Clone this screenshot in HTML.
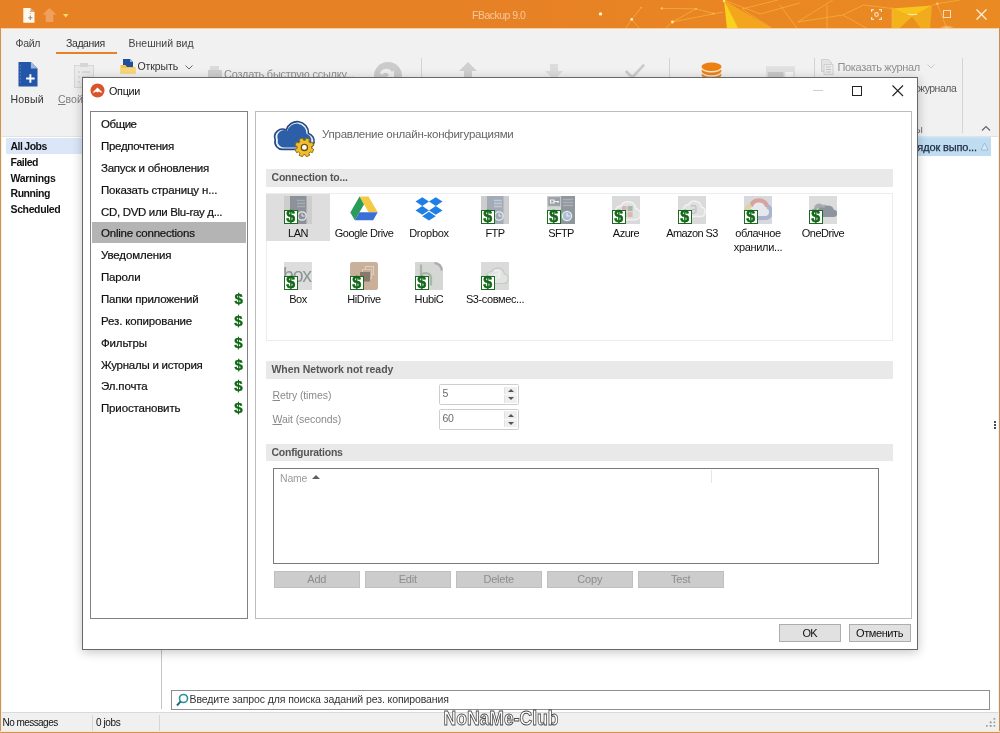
<!DOCTYPE html>
<html lang="ru">
<head>
<meta charset="utf-8">
<title>FBackup 9.0</title>
<style>
*{box-sizing:border-box;margin:0;padding:0}
html,body{width:1000px;height:733px;overflow:hidden;background:#fff}
body{position:relative;font-family:"Liberation Sans","DejaVu Sans",sans-serif;font-size:12px;color:#1a1a1a}
.abs{position:absolute}
.t{position:absolute;white-space:nowrap;line-height:16px;height:16px}
#win{position:absolute;left:0;top:0;width:1000px;height:733px;background:#fff;overflow:hidden;will-change:transform}
#titlebar{position:absolute;left:0;top:0;width:1000px;height:29px;background:#e78125}
#titlebar:after{content:"";position:absolute;left:0;top:28px;width:1000px;height:1px;background:#f4cfa6}
#ribbon{position:absolute;left:1px;top:29px;width:998px;height:108px;background:#f1f1f1;box-shadow:inset 0 1px 0 #fbf1e6;border-bottom:1px solid #e2e2e2}
.tab{font-size:10.5px;color:#444}
.gray{color:#8f8f8f}
#leftpane{position:absolute;left:1px;top:137px;width:161px;height:572px;background:#fff;border-right:1px solid #c4c4c4}
.job{font-weight:bold;font-size:10.5px;color:#111;left:9.5px;letter-spacing:-0.4px}
#status{position:absolute;left:1px;top:712px;width:998px;height:20px;background:#f0f0f0;border-top:1px solid #d9d9d9}
#search{position:absolute;left:171px;top:690px;width:819px;height:20px;border:1px solid #8e8e8e;background:#fff}
/* dialog */
#dlg{position:absolute;left:82px;top:77px;width:836px;height:573px;background:#fff;border:1px solid #686868;box-shadow:0 2px 10px rgba(0,0,0,.24)}
#nav{position:absolute;left:7px;top:33px;width:158px;height:508px;border:1px solid #828282;background:#fff}
#nav .it{-webkit-text-stroke:0.2px #111;position:absolute;left:1px;width:154px;height:22px;line-height:22px;padding-left:9px;font-size:11.5px;color:#111;white-space:nowrap;letter-spacing:-0.15px}
#nav .sel{background:#b4b4b4}
#nav .d{-webkit-text-stroke:0.35px #0b5a10;position:absolute;right:3.5px;top:0;color:#0b6a10;font-weight:bold;font-size:15px}
#panel{position:absolute;left:172px;top:33px;width:657px;height:508px;border:1px solid #bdbdbd;background:#fff}
.hdr{position:absolute;left:10px;width:627px;height:17.5px;background:#e9e9e9;font-weight:bold;font-size:10.5px;color:#555;line-height:16px;padding-left:5.5px;letter-spacing:-0.2px}
.ic{position:absolute;width:66px;text-align:center;font-size:11px;line-height:14px;color:#111;letter-spacing:-0.2px}
.cell{position:absolute;width:66px;height:47px}
.selc{background:#dedede;width:64px;margin-left:1px}
.ico{position:absolute;left:19px;top:2px;width:28px;height:28px}
.selc .ico{left:18px}
.ico svg{position:absolute;left:0;top:0;display:block}
.bdg{position:absolute;left:0;top:14px;width:14px;height:14px;background:#fff;border:1px solid #1d6b22;color:#126818;font-weight:bold;font-size:16px;line-height:12px;text-align:center;-webkit-text-stroke:0.5px #126818;text-indent:-0.5px;font-family:"Liberation Sans",sans-serif}
.lbl{position:absolute;left:-10px;width:86px;top:32px;text-align:center;font-size:11px;line-height:14px;color:#111;letter-spacing:-0.2px;white-space:nowrap}
.selc .lbl{left:-11px}
.btn{position:absolute;height:18px;background:#e1e1e1;border:1px solid #adadad;font-size:11px;text-align:center;line-height:16px;color:#111}
.dbtn{position:absolute;top:458.5px;width:85.5px;height:17px;letter-spacing:-0.2px;background:#cccccc;border:1px solid #bfbfbf;font-size:11px;text-align:center;line-height:15px;color:#8d8d8d}
.spin{position:absolute;left:183px;width:79.5px;height:21px;border:1px solid #cdcdcd;border-radius:1.5px;background:#fff;font-size:10.5px;color:#6a6a6a;line-height:16px;padding-left:2.5px;letter-spacing:-0.4px}
.spin i{position:absolute;right:1px;top:1.5px;width:13px;height:16px;background:#efefef;border-left:1px solid #e2e2e2}
.spin i:before{content:"";position:absolute;left:3px;top:2.5px;border:3px solid transparent;border-top:0;border-bottom:3.500px solid #555}
.spin i:after{content:"";position:absolute;left:3px;top:10.500px;border:3px solid transparent;border-bottom:0;border-top:3.500px solid #555}
.spin b{position:absolute;right:1px;top:9px;width:13px;height:1px;background:#fafafa}
</style>
</head>
<body>
<div id="win">
  <div id="titlebar">
    <svg class="abs" style="left:540px;top:0" width="460" height="29" viewBox="540 0 460 29">
      <defs>
        <linearGradient id="tg" x1="0" x2="1" y1="0" y2="0">
          <stop offset="0" stop-color="#e78125"/><stop offset="0.4" stop-color="#e98623"/><stop offset="1" stop-color="#ea8a22"/>
        </linearGradient>
        <radialGradient id="glow"><stop offset="0" stop-color="#fff" stop-opacity=".85"/><stop offset="1" stop-color="#fff" stop-opacity="0"/></radialGradient>
      </defs>
      <rect x="540" width="460" height="29" fill="url(#tg)"/>
      <polygon points="724,0 773,29 738,29" fill="#f2a51d"/>
      <polygon points="724,0 738.500,29 727,29" fill="#f8d21c"/>
      <polygon points="892,8.500 932,5.500 912,17" fill="#f6c41c"/>
      <polygon points="892,8.500 912,17 899,29 892,29" fill="#f3b31d"/>
      <polygon points="932,5.500 930,29 921,29 912,17" fill="#f2ab1d"/>
      <polygon points="912,17 921,29 899,29" fill="#e9911f"/>
      <g stroke="#f6b540" stroke-width=".8" fill="none" opacity=".85">
        <path d="M625,29L631.700,19.400L640,29M631.700,19.400L641,7.700M665,29L672.400,22L723,12M672.400,22L696,8.800L713.500,13.600M661.800,8.400L696,8.800M742,9L778,0M742,9L773,29M724,0L760,14L800,3M780,5L797.600,29M832.800,0L797.600,22L842.700,15M827,5V29M842.700,15L863.600,5L892,8.500M842.700,15L868,29M892,7V29M932,5.500L937.300,3.700L960,0M937.300,3.700L947,29"/>
      </g>
      <g fill="#ffe9a8"><circle cx="600.500" cy="13.900" r="1.700" fill="#fff3cf"/><circle cx="631.700" cy="19.400" r="1.400"/><circle cx="661.800" cy="8.400" r="1.200" fill="#f9c15a"/><circle cx="641" cy="7.700" r=".9" fill="#f4ad4a"/><circle cx="672.400" cy="22" r="1.400"/><circle cx="696" cy="8.800" r="1.100" fill="#f8bd52"/><circle cx="713.500" cy="13.600" r="1" fill="#f8bd52"/><circle cx="937.300" cy="3.700" r="1.200" fill="#f9c866"/><circle cx="724" cy="1" r="1.200" fill="#fbe27a"/></g>
      <ellipse cx="947" cy="30" rx="9" ry="5" fill="url(#glow)"/>
    </svg>
    <!-- quick access -->
    <svg class="abs" style="left:23px;top:7.500px" width="12" height="15" viewBox="0 0 12 15"><path d="M0.300,0h7.200l4,4v10.800h-11.200z" fill="#fff8ec"/><path d="M7.500,0v4h4z" fill="#d9a66a"/><path d="M7.300,7.500v4.500M5.200,9.800h4.200" stroke="#8d8d8d" stroke-width="1.100"/><path d="M7.300,3v3" stroke="#a9a9a9" stroke-width="1" stroke-dasharray="1 1"/></svg>
    <svg class="abs" style="left:42px;top:8px" width="15" height="14" viewBox="0 0 15 14"><path d="M7.500,0L14.500,6.500H11.300V14H3.700V6.500H0.500z" fill="#f0a05c"/></svg>
    <svg class="abs" style="left:63px;top:14px" width="6" height="4" viewBox="0 0 6 4"><path d="M0,0h5.600l-2.800,3.400z" fill="#fbd86a"/></svg>
    <div class="t" style="left:472px;top:7px;font-size:10.500px;color:#f6c79a;letter-spacing:-0.5px">FBackup 9.0</div>
    <!-- window controls -->
    <svg class="abs" style="left:871px;top:9px" width="11" height="11" viewBox="0 0 11 11" fill="none" stroke="#f9dcbc" stroke-width="1.200"><path d="M0.600,3V0.600H3M8,0.600h2.400V3M10.400,8v2.400H8M3,10.400H0.600V8"/><circle cx="5.500" cy="5.500" r="1.800"/></svg>
    <div class="abs" style="left:907.500px;top:14px;width:9px;height:1px;background:#fbe7b8"></div>
    <div class="abs" style="left:942.500px;top:10px;width:8.500px;height:8px;border:1px solid #f9dcbc"></div>
    <svg class="abs" style="left:976px;top:9px" width="11" height="11" viewBox="0 0 11 11" stroke="#fdeedd" stroke-width="1.300"><path d="M0.500,0.500l10,10M10.500,0.500l-10,10"/></svg>
  </div>

  <div id="ribbon">
    <div class="t tab" style="left:14.500px;top:6px;letter-spacing:-0.33px">Файл</div>
    <div class="t tab" style="left:65px;top:5.500px;letter-spacing:-0.4px;color:#333">Задания</div>
    <div class="abs" style="left:55px;top:23px;width:61px;height:2px;background:#e78125"></div>
    <div class="t tab" style="left:127.500px;top:6px;letter-spacing:0">Внешний вид</div>

    <!-- Новый -->
    <svg class="abs" style="left:16.500px;top:33px" width="20" height="24.500" viewBox="0 0 21 26" preserveAspectRatio="none"><path d="M0.500,0h13l7,7v19h-20z" fill="#2356a8"/><path d="M13.500,0v7h7z" fill="#9db7e0"/><path d="M2.500,3v20" stroke="#5f86c9" stroke-width="1" stroke-dasharray="1.500 2"/><path d="M13,13v9M8.500,17.500h9" stroke="#fff" stroke-width="2"/></svg>
    <div class="t" style="left:9.500px;top:62px;font-size:10.500px;color:#333;letter-spacing:0.18px">Новый</div>
    <!-- Свой -->
    <svg class="abs" style="left:73px;top:34px" width="20" height="25" viewBox="0 0 20 25"><rect x="0.500" y="2.500" width="19" height="22" fill="#eaeaea" stroke="#d6d6d6"/><rect x="6" y="0" width="8" height="4" fill="#d6d6d6"/><path d="M4,9h2M8,9h8M4,14h2M8,14h8M4,19h2M8,19h8" stroke="#d2d2d2" stroke-width="1.3"/></svg>
    <div class="t" style="left:57px;top:62px;font-size:10.500px;color:#7d7d7d"><u>С</u>вой...</div>
    <!-- Открыть -->
    <svg class="abs" style="left:119px;top:30px" width="16" height="15" viewBox="0 0 16 15"><path d="M3,0h7l3,3v6h-10z" fill="#1f4e9c"/><path d="M10,0v3h3z" fill="#8eb0e0"/><path d="M0.500,6h5l1.500,2h8.500v6.500h-15z" fill="#f2c14e"/><path d="M0.500,9h15v5.500h-15z" fill="#f7d779"/></svg>
    <div class="t" style="left:136.500px;top:28.800px;font-size:10.500px;color:#333;letter-spacing:-0.1px">Открыть</div>
    <svg class="abs" style="left:184px;top:35.500px" width="8" height="5" viewBox="0 0 8 5" fill="none" stroke="#666" stroke-width="1"><path d="M0.500,0.500l3.500,3.500l3.500,-3.500"/></svg>
    <!-- Создать быструю ссылку -->
    <svg class="abs" style="left:207px;top:37px" width="14" height="12" viewBox="0 0 14 12"><rect x="2" y="0" width="9" height="8" fill="#dadada"/><rect x="0" y="4" width="14" height="8" fill="#cfcfcf"/></svg>
    <div class="t gray" style="left:223px;top:36.500px;font-size:11px;letter-spacing:-0.25px">Создать быструю ссылку...</div>
    <svg class="abs" style="left:372px;top:31.500px" width="30" height="20" viewBox="0 0 30 20"><circle cx="15" cy="15" r="14" fill="#cbcbcb"/><path d="M7,12c2,-5 9,-6 12,-1l2,-2v7h-7l2,-2c-2,-3 -5,-3 -7,0z" fill="#efefef"/></svg>
    <div class="abs" style="left:420px;top:29px;width:1px;height:20px;background:#d3d3d3"></div>
    <svg class="abs" style="left:457px;top:33px" width="20" height="16" viewBox="0 0 20 16"><path d="M10,0L19,9H14V16H6V9H1z" fill="#d0d0d0"/></svg>
    <svg class="abs" style="left:544px;top:34px" width="20" height="16" viewBox="0 0 20 14"><path d="M5,0h8v7h5L9,16L0,7h5z" fill="#dcdcdc"/></svg>
    <svg class="abs" style="left:623px;top:34px" width="22" height="16" viewBox="0 0 24 16" fill="none" stroke="#cbcbcb" stroke-width="3"><path d="M2,8l7,7L22,1"/></svg>
    <div class="abs" style="left:668px;top:29px;width:1px;height:20px;background:#d3d3d3"></div>
    <svg class="abs" style="left:699.500px;top:32.500px" width="21" height="17" viewBox="0 0 21 17"><ellipse cx="10.500" cy="13" rx="10" ry="4.200" fill="#e9852a"/><ellipse cx="10.500" cy="10.600" rx="10" ry="4.200" fill="#fbe3c4"/><ellipse cx="10.500" cy="9" rx="10" ry="4.200" fill="#ea8321"/><ellipse cx="10.500" cy="6.400" rx="10" ry="4.200" fill="#fde7c6"/><ellipse cx="10.500" cy="4.700" rx="10" ry="4.200" fill="#ee7f12"/></svg>
    <svg class="abs" style="left:765px;top:36.500px" width="29" height="13" viewBox="0 0 30 13"><rect x="0" y="0" width="30" height="13" fill="#e0e0e0"/><rect x="2" y="6" width="16" height="5" fill="#c8c8c8"/><rect x="20" y="6" width="8" height="5" fill="#f5f5f5"/></svg>
    <div class="abs" style="left:812.500px;top:29px;width:1px;height:70px;background:#d3d3d3"></div>
    <svg class="abs" style="left:820px;top:30px" width="13" height="16" viewBox="0 0 13 16"><path d="M0.500,0.500h7l3,3v9h-10z" fill="#e4e4e4" stroke="#cfcfcf"/><path d="M3,5.500h9v10h-9z" fill="#ececec" stroke="#cfcfcf"/><path d="M5,8h5M5,10.500h5M5,13h5" stroke="#c4c4c4"/></svg>
    <div class="t gray" style="left:836.500px;top:30px;font-size:11px;letter-spacing:-0.33px">Показать журнал</div>
    <svg class="abs" style="left:926px;top:35px" width="8" height="5" viewBox="0 0 8 5" fill="none" stroke="#c8c8c8" stroke-width="1"><path d="M0.500,0.500l3.500,3.500l3.500,-3.500"/></svg>
    <div class="t" style="left:917px;top:51px;font-size:10.500px;color:#5a5a5a;letter-spacing:-0.5px">журнала</div>
    <div class="t" style="left:914px;top:91.500px;font-size:11px;color:#777">ы</div>
    <div class="abs" style="left:961px;top:29px;width:1px;height:75px;background:#d3d3d3"></div>
    <svg class="abs" style="left:980px;top:96px" width="10" height="6" viewBox="0 0 10 6" fill="none" stroke="#666" stroke-width="1.2"><path d="M1,5.500l4,-4l4,4"/></svg>
  </div>

  <!-- list header at right -->
  <div class="abs" style="left:900px;top:136px;width:91px;height:20px;background:linear-gradient(#d7e8f5,#bfdcf1 3px)"></div>
  <div class="t" style="left:911.500px;top:139px;font-size:11px;color:#1c2b40;letter-spacing:-0.15px;-webkit-text-stroke:0.25px #1c2b40">рядок выпо...</div>
  <svg class="abs" style="left:979.500px;top:141.500px" width="9" height="9" viewBox="0 0 9 9" fill="#dbeaf6" stroke="#8fb3d1" stroke-width=".8"><path d="M4.500,1L8,8H1z"/></svg>
  <div class="abs" style="left:994px;top:421px;width:2px;height:8px;background:repeating-linear-gradient(#4a4a4a 0 2px,transparent 2px 3px)"></div>

  <div id="leftpane">
    <div class="abs" style="left:5px;top:1px;width:156px;height:16px;background:#dbe7f9"></div>
    <div class="t job" style="top:1px;letter-spacing:-0.5px;word-spacing:-0.5px">All Jobs</div>
    <div class="t job" style="top:16.800px;letter-spacing:-0.49px">Failed</div>
    <div class="t job" style="top:32.600px;letter-spacing:-0.31px">Warnings</div>
    <div class="t job" style="top:48.200px;letter-spacing:-0.45px">Running</div>
    <div class="t job" style="top:64.200px;letter-spacing:-0.37px">Scheduled</div>
  </div>

  <div id="search">
    <svg class="abs" style="left:4px;top:2px" width="13" height="14" viewBox="0 0 13 14" fill="none"><circle cx="7.500" cy="5.500" r="4" stroke="#2a8f9a" stroke-width="1.600"/><path d="M4.700,8.300L1,12.500" stroke="#1f6a80" stroke-width="2"/></svg>
    <div class="t" style="left:17.500px;top:0.200px;font-size:10.500px;color:#333;letter-spacing:-0.1px">Введите запрос для поиска заданий рез. копирования</div>
  </div>
  <div id="status">
    <div class="t" style="left:1.500px;top:1.500px;font-size:10px;color:#111;letter-spacing:-0.55px">No messages</div>
    <div class="abs" style="left:91px;top:2px;width:1px;height:16px;background:#d6d6d6"></div>
    <div class="t" style="left:95px;top:1.500px;font-size:10px;color:#111;letter-spacing:-0.4px">0 jobs</div>
    <div class="abs" style="left:158px;top:2px;width:1px;height:16px;background:#d6d6d6"></div>
    <svg class="abs" style="left:984.800px;top:5.300px" width="10" height="10" viewBox="0 0 10 10" fill="#a0a0a0"><rect x="7.500" y="0" width="1.700" height="1.700"/><rect x="3.800" y="3.500" width="1.700" height="1.700" fill="#8a8a8a"/><rect x="7.500" y="3.500" width="1.700" height="1.700"/><rect x="0" y="7" width="1.700" height="1.700"/><rect x="3.800" y="7" width="1.700" height="1.700" fill="#8a8a8a"/><rect x="7.500" y="7" width="1.700" height="1.700"/></svg>
  </div>
  <svg class="abs" style="left:438px;top:704px" width="126" height="26" viewBox="0 0 126 26"><text x="5.500" y="20.800" textLength="115" lengthAdjust="spacingAndGlyphs" font-family="Liberation Sans, sans-serif" font-weight="bold" font-size="21" fill="#fff" stroke="#4a4a4a" stroke-width="0.900">NoNaMe-Club</text></svg>

  <div class="abs" style="left:0;top:28px;width:2px;height:705px;background:linear-gradient(90deg,#c9935a 0 50%,rgba(252,236,216,.8) 50% 100%)"></div>
  <div class="abs" style="left:998px;top:28px;width:2px;height:705px;background:linear-gradient(90deg,rgba(252,236,216,.9) 0 50%,#bd8f63 50% 100%)"></div>
  <div class="abs" style="left:0;top:731px;width:1000px;height:2px;background:linear-gradient(#f6e6cc 0 50%,#cf9458 50% 100%)"></div>
  <!-- DIALOG -->
  <div id="dlg">
    <svg class="abs" style="left:7px;top:5px" width="15" height="15" viewBox="0 0 15 15"><circle cx="7.500" cy="7.500" r="7" fill="#d9532c"/><path d="M2.500,9.500L7.500,4.500L12.500,9.500H10.500L9,8.500L7.500,9.500L6,8.500L4.500,9.500z" fill="#fff"/></svg>
    <div class="t" style="left:26px;top:5px;font-size:10.800px;color:#111;letter-spacing:-0.3px">Опции</div>
    <div class="abs" style="left:729.500px;top:12px;width:10px;height:1px;background:#cfcfcf"></div>
    <div class="abs" style="left:769px;top:8px;width:10px;height:10px;border:1px solid #222"></div>
    <svg class="abs" style="left:809px;top:7px" width="12" height="12" viewBox="0 0 12 12" stroke="#222" stroke-width="1.100"><path d="M0.500,0.500l10.500,10.500M11,0.500l-10.500,10.500"/></svg>

    <div id="nav">
      <div class="it" style="top:1px;letter-spacing:-0.45px">Общие</div>
      <div class="it" style="top:23px;letter-spacing:-0.3px">Предпочтения</div>
      <div class="it" style="top:45px;letter-spacing:-0.24px">Запуск и обновления</div>
      <div class="it" style="top:67px;letter-spacing:-0.18px">Показать страницу н...</div>
      <div class="it" style="top:89px;letter-spacing:-0.33px">CD, DVD или Blu-ray д...</div>
      <div class="it sel" style="top:110px;height:21px;line-height:23px;letter-spacing:-0.23px">Online connections</div>
      <div class="it" style="top:132px">Уведомления</div>
      <div class="it" style="top:154px">Пароли</div>
      <div class="it" style="top:176px;letter-spacing:-0.22px">Папки приложений<span class="d">$</span></div>
      <div class="it" style="top:198px">Рез. копирование<span class="d">$</span></div>
      <div class="it" style="top:220px">Фильтры<span class="d">$</span></div>
      <div class="it" style="top:242px;letter-spacing:-0.25px">Журналы и история<span class="d">$</span></div>
      <div class="it" style="top:263px">Эл.почта<span class="d">$</span></div>
      <div class="it" style="top:285px">Приостановить<span class="d">$</span></div>
    </div>

    <div id="panel">
      <svg class="abs" style="left:14px;top:3px" width="50" height="44" viewBox="0 0 50 44"><path d="M13,34.400H36A8.200,8.200 0 0 0 38.500,18.400A11.300,11.300 0 0 0 16.300,15A8,8 0 0 0 5.200,25A7.500,7.500 0 0 0 13,34.400z" fill="#e4f2ff" stroke="#27477a" stroke-width="1.600"/><path d="M13,34.400H36A8.200,8.200 0 0 0 38.500,18.400A11.300,11.300 0 0 0 16.300,15A8,8 0 0 0 5.200,25A7.500,7.500 0 0 0 13,34.400z" fill="#2d5fa9" transform="translate(3.400,2.900) scale(0.860)"/><path d="M41.64,33.31L43.70,34.33L42.34,37.62L40.17,36.87L38.87,38.17L39.62,40.34L36.33,41.70L35.31,39.64L33.49,39.64L32.47,41.70L29.18,40.34L29.93,38.17L28.63,36.87L26.46,37.62L25.10,34.33L27.16,33.31L27.16,31.49L25.10,30.47L26.46,27.18L28.63,27.93L29.93,26.63L29.18,24.46L32.47,23.10L33.49,25.16L35.31,25.16L36.33,23.10L39.62,24.46L38.87,26.63L40.17,27.93L42.34,27.18L43.70,30.47L41.64,31.49z" fill="#f2be2c" stroke="#8f6d12" stroke-width="1" stroke-linejoin="round"/><circle cx="34.400" cy="32.400" r="3.100" fill="#fff" stroke="#6d5410" stroke-width="1.300"/></svg>
      <div class="t" style="left:66px;top:14px;font-size:11.5px;color:#666;letter-spacing:-0.25px">Управление онлайн-конфигурациями</div>
      <div class="hdr" style="top:57px">Connection to...</div>
      <div class="abs" id="icons" style="left:10px;top:81px;width:627px;height:148px;border:1px solid #ececec">
<!--ICONS-->
<div class="cell selc" style="left:-2.0px;top:0.0px"><div class="ico"><svg width="28" height="28" viewBox="0 0 28 28"><rect width="28" height="28" fill="#cdcdcd"/><rect x="6" y="0" width="16.500" height="28" fill="#8d919a"/><path d="M13,4.500h8M13,7.500h8M13,10.500h8" stroke="#a7abb3" stroke-width="1.300"/><circle cx="18" cy="20" r="4.200" fill="#8d919a" stroke="#e9e9e9" stroke-width="1.300"/><path d="M18,17.500v2.500h2.500" stroke="#e9e9e9" stroke-width="1" fill="none"/></svg><span class="bdg">$</span></div><div class="lbl" style="letter-spacing:-0.5px">LAN</div></div>
<div class="cell" style="left:64.0px;top:0.0px"><div class="ico"><svg width="28" height="28" viewBox="0 0 28 28"><g transform="translate(0.300,0.500)"><polygon points="9.200,0 18.200,0 27.400,15.800 18.400,15.800" fill="#f6c944"/><polygon points="9.200,0 13.700,7.900 4.500,23.800 0,15.900" fill="#2a9c5a"/><polygon points="9.100,15.800 27.400,15.800 22.900,23.800 4.500,23.800" fill="#3a6fd6"/></g></svg></div><div class="lbl" style="letter-spacing:-0.46px">Google Drive</div></div>
<div class="cell" style="left:129.0px;top:0.0px"><div class="ico"><svg width="28" height="28" viewBox="0 0 28 28"><g fill="#1f7fe5" transform="translate(0.500,1.200)"><polygon points="6.750,0 13.500,4.400 6.750,8.800 0,4.400"/><polygon points="20.250,0 27,4.400 20.250,8.800 13.500,4.400"/><polygon points="6.750,8.800 13.500,13.200 6.750,17.600 0,13.200"/><polygon points="20.250,8.800 27,13.200 20.250,17.600 13.500,13.200"/><polygon points="6.750,19 13.500,14.600 20.250,19 13.500,23.400"/></g></svg></div><div class="lbl" style="letter-spacing:-0.28px">Dropbox</div></div>
<div class="cell" style="left:195.0px;top:0.0px"><div class="ico"><svg width="28" height="28" viewBox="0 0 28 28"><rect width="28" height="28" fill="#cdcdcd"/><rect x="6" y="0" width="16.500" height="28" fill="#a2abb8"/><path d="M13,4.500h8M13,7.500h8M13,10.500h8" stroke="#c3cad3" stroke-width="1.300"/><circle cx="18" cy="20" r="4.200" fill="#a2abb8" stroke="#e9e9e9" stroke-width="1.300"/><path d="M18,17.500v2.500h2.500" stroke="#e9e9e9" stroke-width="1" fill="none"/></svg><span class="bdg">$</span></div><div class="lbl" style="letter-spacing:-0.6px">FTP</div></div>
<div class="cell" style="left:261.0px;top:0.0px"><div class="ico"><svg width="28" height="28" viewBox="0 0 28 28"><rect width="28" height="28" fill="#d3d8d4"/><rect x="14" y="0" width="14" height="28" fill="#8f969c"/><path d="M16,3.500h10M16,6.500h10M16,9.500h10" stroke="#aab0b5" stroke-width="1.300"/><rect x="0.700" y="0.700" width="13" height="9.600" fill="#9aa0a4" stroke="#c9cdcf" stroke-width="1"/><path d="M3.500,4h3.500v3h-3.500zM7,5.500h5M11,5.500v1.500" stroke="#f4f4f4" stroke-width="1.200" fill="none"/><circle cx="20" cy="20" r="4.600" fill="#a9bdd4" stroke="#e6eaee" stroke-width="1.300"/><path d="M20,17v3h2.800" stroke="#eef2f6" stroke-width="1.100" fill="none"/></svg><span class="bdg">$</span></div><div class="lbl" style="letter-spacing:-0.6px">SFTP</div></div>
<div class="cell" style="left:326.0px;top:0.0px"><div class="ico"><svg width="28" height="28" viewBox="0 0 28 28"><rect width="28" height="28" fill="#dadada"/><path d="M6,22.500h15.500a4.800,4.800 0 0 0 0.800,-9.500a6.800,6.800 0 0 0 -12.800,-2.200a4.200,4.200 0 0 0 -4.700,4.200a3.900,3.900 0 0 0 1.200,7.500z" fill="#e1e1e1" stroke="#f4f4f4" stroke-width="1.100" transform="translate(-2.300,-2.600) scale(1.180)"/><rect x="10" y="10" width="4.600" height="5.200" fill="#d9b6b3"/><rect x="15.600" y="10" width="5" height="5.200" fill="#a9b9ad"/><rect x="10" y="16.200" width="4.600" height="5" fill="#b5c0cf"/><rect x="15.600" y="16.200" width="5" height="5" fill="#dbb9ae"/></svg><span class="bdg">$</span></div><div class="lbl" style="letter-spacing:-0.45px">Azure</div></div>
<div class="cell" style="left:392.0px;top:0.0px"><div class="ico"><svg width="28" height="28" viewBox="0 0 28 28"><rect width="28" height="28" fill="#dadada"/><path d="M6,22.500h15.500a4.800,4.800 0 0 0 0.800,-9.500a6.800,6.800 0 0 0 -12.800,-2.200a4.200,4.200 0 0 0 -4.700,4.200a3.900,3.900 0 0 0 1.200,7.500z" fill="#e0e0e0" stroke="#f1f1f1" stroke-width="1.500" transform="translate(1,-2)"/><path d="M13,10.500c1.500,-1.500 5,-1.400 5,1v5M18,13.500c-3,-.3 -5.200,.3 -5.200,2.200c0,2 3.600,2 5.200,0" fill="none" stroke="#c4c4c4" stroke-width="1.500"/></svg><span class="bdg">$</span></div><div class="lbl" style="letter-spacing:-0.6px">Amazon S3</div></div>
<div class="cell" style="left:458.0px;top:0.0px"><div class="ico"><svg width="28" height="28" viewBox="0 0 28 28"><rect width="28" height="28" fill="#d7d9df"/><path d="M8,22H21a6,6 0 0 0 2,-11.600a8.500,8.500 0 0 0 -16,-0.800a6.500,6.500 0 0 0 1,12.400z" fill="#e6e8ee"/><g fill="none" stroke-width="4.200"><path d="M6.800,10.200a8.600,8.600 0 0 1 16.400,0.400" stroke="#d8a39d"/><path d="M23,10.300a6,6 0 0 1 -2,11.700H14" stroke="#aab4ca"/><path d="M14.500,22H8a6.500,6.500 0 0 1 -4.300,-1.700" stroke="#aac4ab"/><path d="M4,20.600a6.500,6.500 0 0 1 3.200,-11" stroke="#ddd2a2"/></g></svg><span class="bdg">$</span></div><div class="lbl" style="letter-spacing:-0.32px">облачное<br>хранили...</div></div>
<div class="cell" style="left:523.0px;top:0.0px"><div class="ico"><svg width="28" height="28" viewBox="0 0 28 28"><rect width="28" height="28" fill="#dcdcdc"/><path d="M4,20.500a4.200,4.200 0 0 1 1.200,-8a5.200,5.200 0 0 1 8.800,-3.600a5.500,5.500 0 0 1 6,3.600h-12z" fill="#a9aaab"/><path d="M9,21h15.500a3.600,3.600 0 0 0 0.300,-7.200a5.400,5.400 0 0 0 -9.800,-1.800a4.300,4.300 0 0 0 -6.600,3.500a3,3 0 0 0 .6,5.500z" fill="#8e949d"/></svg><span class="bdg">$</span></div><div class="lbl" style="letter-spacing:-0.5px">OneDrive</div></div>
<div class="cell" style="left:-2.0px;top:65.5px"><div class="ico"><svg width="28" height="28" viewBox="0 0 28 28"><rect width="28" height="28" fill="#dddddd"/><text x="-1" y="19.500" font-family="Liberation Sans, sans-serif" font-size="19.500" fill="#8d9799" letter-spacing="-1.200">box</text></svg><span class="bdg">$</span></div><div class="lbl" style="letter-spacing:-0.5px">Box</div></div>
<div class="cell" style="left:64.0px;top:65.5px"><div class="ico"><svg width="28" height="28" viewBox="0 0 28 28"><rect width="28" height="28" rx="2.500" fill="#c9b09a"/><rect x="15.500" y="4.500" width="8" height="8" fill="none" stroke="#e2d2c3" stroke-width="1"/><rect x="12.500" y="7.500" width="9" height="9" fill="#c4ab96" stroke="#dccabb" stroke-width="1"/><rect x="10" y="10" width="10" height="9.500" fill="#867b6b"/></svg><span class="bdg">$</span></div><div class="lbl" style="letter-spacing:-0.34px">HiDrive</div></div>
<div class="cell" style="left:129.0px;top:65.5px"><div class="ico"><svg width="28" height="28" viewBox="0 0 28 28"><rect width="28" height="28" fill="#ffffff"/><path d="M0,0h20a8,8 0 0 1 8,8v20h-28z" fill="#d5d7d5"/><path d="M19.500,1.200a7.500,7.500 0 0 1 7.300,7.300" stroke="#a9aca9" stroke-width="2.200" fill="none"/><path d="M6,2.500v21M6,13.500c1,-3 9,-4 10,2v8" stroke="#abb5ab" stroke-width="2.300" fill="none"/></svg><span class="bdg">$</span></div><div class="lbl" style="letter-spacing:-0.32px">HubiC</div></div>
<div class="cell" style="left:195.0px;top:65.5px"><div class="ico"><svg width="28" height="28" viewBox="0 0 28 28"><rect width="28" height="28" fill="#dadada"/><path d="M6,22.500h15.500a4.800,4.800 0 0 0 0.800,-9.500a6.800,6.800 0 0 0 -12.800,-2.200a4.200,4.200 0 0 0 -4.700,4.200a3.900,3.900 0 0 0 1.200,7.500z" fill="#e2e4e2" stroke="#c2cbc4" stroke-width="1.200" transform="translate(1,-1)"/><path d="M13.500,9.500c1.500,-1.500 5,-1.400 5,1v5M18.500,12.500c-3,-.3 -5.200,.3 -5.200,2.200c0,2 3.600,2 5.200,0" fill="none" stroke="#eeeeee" stroke-width="1.600"/></svg><span class="bdg">$</span></div><div class="lbl" style="letter-spacing:-0.4px">S3-совмес...</div></div>
<!--/ICONS-->
</div>
      <div class="hdr" style="top:249px;letter-spacing:-0.06px">When Network not ready</div>
      <div class="t" style="left:16.500px;top:275px;font-size:10.500px;color:#8a8a8a;letter-spacing:-0.1px"><u>R</u>etry (times)</div>
      <div class="t" style="left:16.500px;top:299px;font-size:10.500px;color:#8a8a8a;letter-spacing:-0.07px"><u>W</u>ait (seconds)</div>
      <div class="spin" style="top:272px">5<i></i><b></b></div>
      <div class="spin" style="top:296.500px">60<i></i><b></b></div>
      <div class="hdr" style="top:331.700px;letter-spacing:-0.25px">Configurations</div>
      <div class="abs" style="left:17px;top:356px;width:606px;height:96px;border:1px solid #7a7a7a;background:#fff"></div>
      <div class="t" style="left:24px;top:358px;font-size:10.500px;color:#9a9a9a;letter-spacing:-0.2px">Name</div>
      <div class="abs" style="left:55.500px;top:363px;border:4px solid transparent;border-top:0;border-bottom:4.500px solid #606060"></div>
      <div class="abs" style="left:455px;top:358px;width:1px;height:13px;background:#e6e6e6"></div>
      <div class="dbtn" style="left:18px">Add</div>
      <div class="dbtn" style="left:109px">Edit</div>
      <div class="dbtn" style="left:200px">Delete</div>
      <div class="dbtn" style="left:291px">Copy</div>
      <div class="dbtn" style="left:382px">Test</div>
    </div>
    <div class="btn" style="left:696px;top:546px;width:61.500px;letter-spacing:-0.6px">OK</div>
    <div class="btn" style="left:765.500px;top:546px;width:62px;letter-spacing:-0.41px">Отменить</div>
  </div>
</div>
</body>
</html>
